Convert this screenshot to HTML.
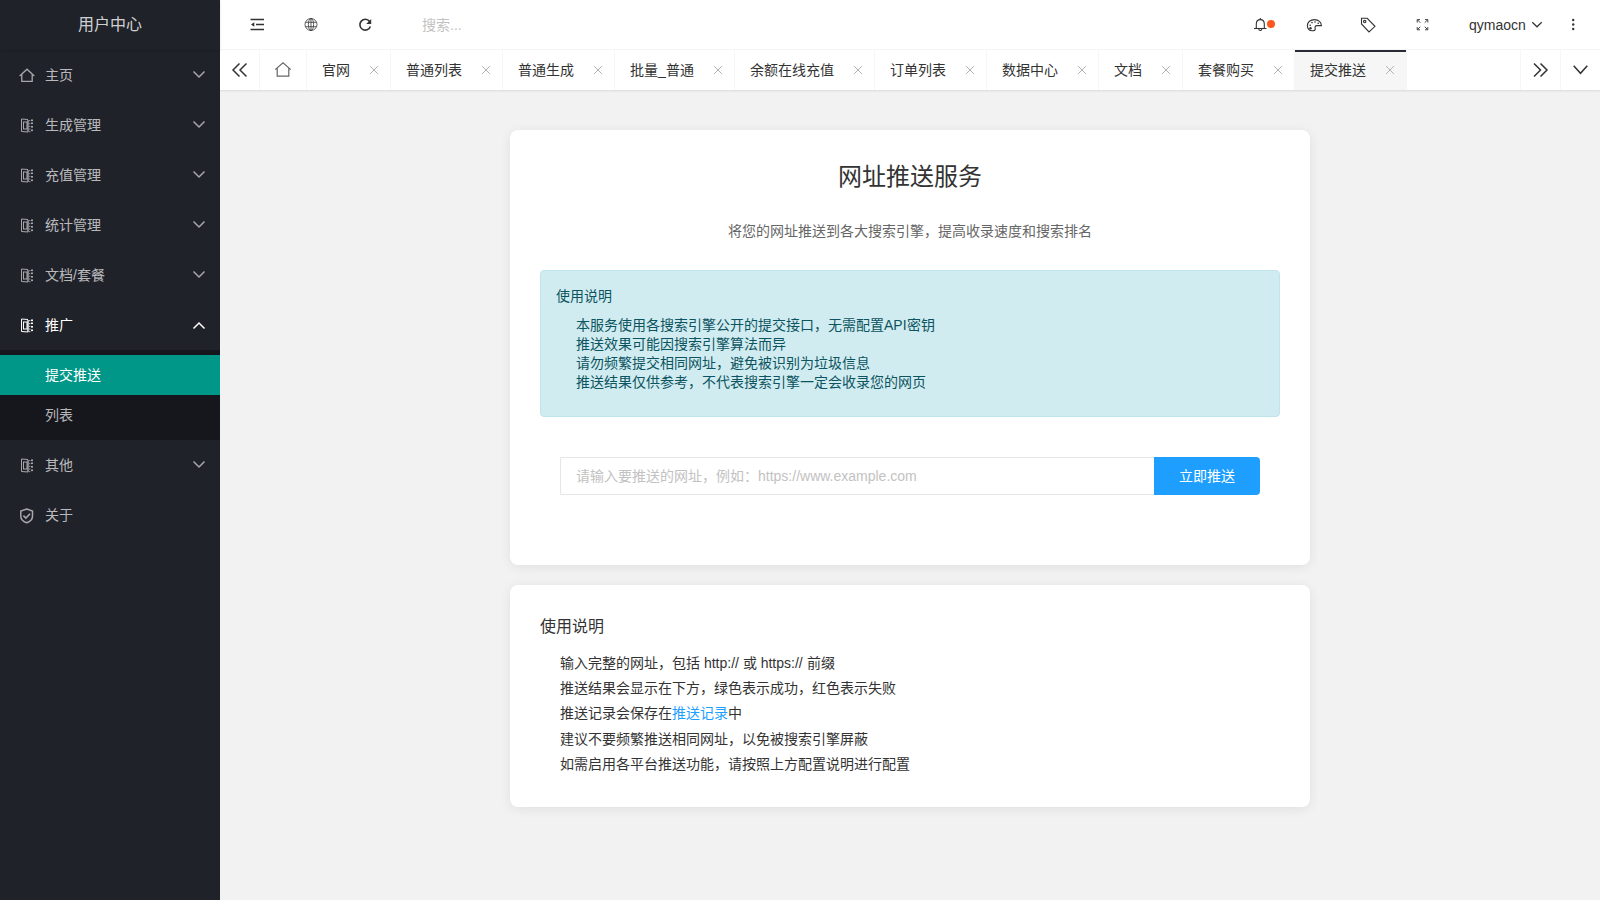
<!DOCTYPE html>
<html lang="zh-CN"><head><meta charset="utf-8">
<style>
*{margin:0;padding:0;box-sizing:border-box}
html,body{width:1600px;height:900px;overflow:hidden}
body{font-family:"Liberation Sans",sans-serif;font-size:14px;color:#333;background:#f2f2f2;position:relative}
svg{display:block;position:absolute;overflow:visible}
.side{position:absolute;left:0;top:0;width:220px;height:900px;background:#20222a}
.logo{position:absolute;left:0;top:0;width:220px;height:50px;line-height:50px;text-align:center;color:rgba(255,255,255,.8);font-size:16px;box-shadow:0 1px 2px 0 rgba(0,0,0,.15);z-index:2}
.nav{position:absolute;left:0;top:50px;width:220px}
.nav .it{position:relative;height:50px;line-height:50px;color:rgba(255,255,255,.7);padding-left:45px}
.nav .it.open{color:#fff}
.nav dl{background:rgba(0,0,0,.3);padding:5px 0}
.nav dd{height:40px;line-height:40px;padding-left:45px;color:rgba(255,255,255,.7)}
.nav dd.this{background:#009688;color:#fff}
.head{position:absolute;left:220px;top:0;width:1380px;height:50px;background:#fff;border-bottom:1px solid #f6f6f6}
.search{position:absolute;left:202px;top:0;line-height:50px;color:#c2c2c2;font-size:14px}
.uname{position:absolute;left:1249px;top:0;line-height:50px;color:#333;font-size:14px}
.tabs{position:absolute;left:220px;top:50px;width:1380px;height:40px;background:#fff;box-shadow:0 1px 2px 0 rgba(0,0,0,.1)}
.tctl{position:absolute;top:0;width:40px;height:40px}
.tl{position:absolute;top:0;height:40px;line-height:40px;border-right:1px solid #f6f6f6;padding:0 40px 0 15px;color:#333;white-space:nowrap}
.tl.first{padding-right:15px}
.tl.this{background:#f6f6f6}
.tl.this:after{content:"";position:absolute;left:0;top:0;width:100%;height:2px;background:#292b34}
.cls{position:absolute;right:8px;top:13px;width:16px;height:16px}
.card{position:absolute;left:510px;width:800px;background:#fff;border-radius:8px;box-shadow:0 2px 12px 0 rgba(0,0,0,.08)}
.c1{top:130px;height:435px}
.c2{top:585px;height:222px}
.title{position:absolute;left:0;top:159px;width:100%;text-align:center;font-size:24px;line-height:36px;color:#333}
.sub{position:absolute;left:0;top:221px;width:100%;text-align:center;font-size:14px;line-height:20px;color:#666}
.info{position:absolute;left:30px;top:140px;width:740px;height:147px;background:#d1ecf1;border:1px solid #bee5eb;border-radius:4px;color:#0c5460;padding:15px}
.info h4{font-weight:normal;font-size:14px;line-height:20px}
.info ul{list-style:none;margin:10px 0;padding-left:20px;line-height:19px}
.inp{position:absolute;left:50px;top:327px;width:594px;height:38px;border:1px solid #e6e6e6;border-right:none;border-radius:2px 0 0 2px;padding-left:15px;line-height:36px;color:#c2c2c2}
.btn{position:absolute;left:644px;top:327px;width:106px;height:38px;background:#1e9fff;color:#fff;text-align:center;line-height:38px;border-radius:0 4px 4px 0}
.c2 h3{position:absolute;left:30px;top:30px;font-weight:normal;font-size:16px;line-height:24px;color:#333}
.c2 ul{position:absolute;left:50px;top:66px;list-style:none;line-height:25.2px;color:#333}
.c2 a{color:#1e9fff;text-decoration:none}
</style></head><body>
<div class="side">
  <div class="logo">用户中心</div>
  <div class="nav">
    <div class="it">主页</div>
    <div class="it">生成管理</div>
    <div class="it">充值管理</div>
    <div class="it">统计管理</div>
    <div class="it">文档/套餐</div>
    <div class="it open">推广</div>
    <dl><dd class="this">提交推送</dd><dd>列表</dd></dl>
    <div class="it">其他</div>
    <div class="it">关于</div>
  </div>
</div>
<div class="head">
  <div class="search">搜索...</div>
  <div class="uname">qymaocn</div>
</div>
<div class="tabs">
  <div class="tctl" style="left:0;border-right:1px solid #f6f6f6"></div>
  <div class="tl first" style="left:40px;width:47px"></div>
  <div class="tl" style="left:87px">官网</div>
  <div class="tl" style="left:171px">普通列表</div>
  <div class="tl" style="left:283px">普通生成</div>
  <div class="tl" style="left:395px">批量_普通</div>
  <div class="tl" style="left:515px">余额在线充值</div>
  <div class="tl" style="left:655px">订单列表</div>
  <div class="tl" style="left:767px">数据中心</div>
  <div class="tl" style="left:879px">文档</div>
  <div class="tl" style="left:963px">套餐购买</div>
  <div class="tl this" style="left:1075px">提交推送</div>
  <div class="tctl" style="left:1300px;border-left:1px solid #f6f6f6"></div>
  <div class="tctl" style="left:1340px;border-left:1px solid #f6f6f6"></div>
</div>
<div class="card c1">
  <div class="title" style="top:29px">网址推送服务</div>
  <div class="sub" style="top:91px">将您的网址推送到各大搜索引擎，提高收录速度和搜索排名</div>
  <div class="info">
    <h4>使用说明</h4>
    <ul>
      <li>本服务使用各搜索引擎公开的提交接口，无需配置API密钥</li>
      <li>推送效果可能因搜索引擎算法而异</li>
      <li>请勿频繁提交相同网址，避免被识别为垃圾信息</li>
      <li>推送结果仅供参考，不代表搜索引擎一定会收录您的网页</li>
    </ul>
  </div>
  <div class="inp">请输入要推送的网址，例如：https://www.example.com</div>
  <div class="btn">立即推送</div>
</div>
<div class="card c2">
  <h3>使用说明</h3>
  <ul>
    <li>输入完整的网址，包括 http:// 或 https:// 前缀</li>
    <li>推送结果会显示在下方，绿色表示成功，红色表示失败</li>
    <li>推送记录会保存在<a>推送记录</a>中</li>
    <li>建议不要频繁推送相同网址，以免被搜索引擎屏蔽</li>
    <li>如需启用各平台推送功能，请按照上方配置说明进行配置</li>
  </ul>
</div>
<svg style="left:0;top:0;z-index:10" width="1600" height="900" viewBox="0 0 1600 900"><path d="M19.7 76 L27 69.2 L34.3 76 M21.8 74 V81.3 H32.2 V74" fill="none" stroke="#a6a7aa" stroke-width="1.3"/><g fill="none" stroke="#a6a7aa" stroke-width="1"><path d="M28 119.5 L21.5 119 V131.5 L28 132"/><rect x="23.5" y="122" width="3.5" height="7"/></g><g fill="#a6a7aa"><rect x="27.3" y="120" width="1.4" height="12"/><rect x="29.3" y="120" width="1" height="1.2"/><rect x="29.3" y="123" width="1" height="1.2"/><rect x="29.3" y="125.8" width="1" height="1.2"/><rect x="29.3" y="128.5" width="1" height="1.2"/><rect x="29.3" y="131" width="1" height="1.2"/><rect x="31" y="119.5" width="2" height="1.6"/><rect x="31" y="122.5" width="2" height="1.6"/><rect x="31" y="126" width="2" height="1.6"/><rect x="31" y="129.5" width="2" height="1.6"/></g><g fill="none" stroke="#a6a7aa" stroke-width="1"><path d="M28 169.5 L21.5 169 V181.5 L28 182"/><rect x="23.5" y="172" width="3.5" height="7"/></g><g fill="#a6a7aa"><rect x="27.3" y="170" width="1.4" height="12"/><rect x="29.3" y="170" width="1" height="1.2"/><rect x="29.3" y="173" width="1" height="1.2"/><rect x="29.3" y="175.8" width="1" height="1.2"/><rect x="29.3" y="178.5" width="1" height="1.2"/><rect x="29.3" y="181" width="1" height="1.2"/><rect x="31" y="169.5" width="2" height="1.6"/><rect x="31" y="172.5" width="2" height="1.6"/><rect x="31" y="176" width="2" height="1.6"/><rect x="31" y="179.5" width="2" height="1.6"/></g><g fill="none" stroke="#a6a7aa" stroke-width="1"><path d="M28 219.5 L21.5 219 V231.5 L28 232"/><rect x="23.5" y="222" width="3.5" height="7"/></g><g fill="#a6a7aa"><rect x="27.3" y="220" width="1.4" height="12"/><rect x="29.3" y="220" width="1" height="1.2"/><rect x="29.3" y="223" width="1" height="1.2"/><rect x="29.3" y="225.8" width="1" height="1.2"/><rect x="29.3" y="228.5" width="1" height="1.2"/><rect x="29.3" y="231" width="1" height="1.2"/><rect x="31" y="219.5" width="2" height="1.6"/><rect x="31" y="222.5" width="2" height="1.6"/><rect x="31" y="226" width="2" height="1.6"/><rect x="31" y="229.5" width="2" height="1.6"/></g><g fill="none" stroke="#a6a7aa" stroke-width="1"><path d="M28 269.5 L21.5 269 V281.5 L28 282"/><rect x="23.5" y="272" width="3.5" height="7"/></g><g fill="#a6a7aa"><rect x="27.3" y="270" width="1.4" height="12"/><rect x="29.3" y="270" width="1" height="1.2"/><rect x="29.3" y="273" width="1" height="1.2"/><rect x="29.3" y="275.8" width="1" height="1.2"/><rect x="29.3" y="278.5" width="1" height="1.2"/><rect x="29.3" y="281" width="1" height="1.2"/><rect x="31" y="269.5" width="2" height="1.6"/><rect x="31" y="272.5" width="2" height="1.6"/><rect x="31" y="276" width="2" height="1.6"/><rect x="31" y="279.5" width="2" height="1.6"/></g><g fill="none" stroke="#fff" stroke-width="1"><path d="M28 319.5 L21.5 319 V331.5 L28 332"/><rect x="23.5" y="322" width="3.5" height="7"/></g><g fill="#fff"><rect x="27.3" y="320" width="1.4" height="12"/><rect x="29.3" y="320" width="1" height="1.2"/><rect x="29.3" y="323" width="1" height="1.2"/><rect x="29.3" y="325.8" width="1" height="1.2"/><rect x="29.3" y="328.5" width="1" height="1.2"/><rect x="29.3" y="331" width="1" height="1.2"/><rect x="31" y="319.5" width="2" height="1.6"/><rect x="31" y="322.5" width="2" height="1.6"/><rect x="31" y="326" width="2" height="1.6"/><rect x="31" y="329.5" width="2" height="1.6"/></g><g fill="none" stroke="#a6a7aa" stroke-width="1"><path d="M28 459.5 L21.5 459 V471.5 L28 472"/><rect x="23.5" y="462" width="3.5" height="7"/></g><g fill="#a6a7aa"><rect x="27.3" y="460" width="1.4" height="12"/><rect x="29.3" y="460" width="1" height="1.2"/><rect x="29.3" y="463" width="1" height="1.2"/><rect x="29.3" y="465.8" width="1" height="1.2"/><rect x="29.3" y="468.5" width="1" height="1.2"/><rect x="29.3" y="471" width="1" height="1.2"/><rect x="31" y="459.5" width="2" height="1.6"/><rect x="31" y="462.5" width="2" height="1.6"/><rect x="31" y="466" width="2" height="1.6"/><rect x="31" y="469.5" width="2" height="1.6"/></g><path d="M193.5 71.5 L199 77.0 L204.5 71.5" fill="none" stroke="#a6a7aa" stroke-width="1.5"/><path d="M193.5 121.5 L199 127.0 L204.5 121.5" fill="none" stroke="#a6a7aa" stroke-width="1.5"/><path d="M193.5 171.5 L199 177.0 L204.5 171.5" fill="none" stroke="#a6a7aa" stroke-width="1.5"/><path d="M193.5 221.5 L199 227.0 L204.5 221.5" fill="none" stroke="#a6a7aa" stroke-width="1.5"/><path d="M193.5 271.5 L199 277.0 L204.5 271.5" fill="none" stroke="#a6a7aa" stroke-width="1.5"/><path d="M193.5 461.5 L199 467.0 L204.5 461.5" fill="none" stroke="#a6a7aa" stroke-width="1.5"/><path d="M193.5 328.5 L199 323 L204.5 328.5" fill="none" stroke="#fff" stroke-width="1.5"/><path d="M26.7 509 L32.5 511 V516.2 C32.5 519.6 29.8 521.6 26.7 522.8 C23.6 521.6 20.8 519.6 20.8 516.2 V511 Z" fill="none" stroke="#a6a7aa" stroke-width="1.5"/><path d="M23.4 515.6 L25.9 518.1 L30 513.8" fill="none" stroke="#a6a7aa" stroke-width="1.6"/><g stroke="#333" stroke-width="1.5" fill="none"><path d="M250.5 19.5 H264 M256 24.5 H264 M250.5 29.5 H264"/></g><path d="M251 24.5 L254.3 22.3 V26.7 Z" fill="#333"/><g stroke="#333" stroke-width="0.8" fill="none"><circle cx="311" cy="24.5" r="6"/><ellipse cx="311" cy="24.5" rx="2.6" ry="6"/><path d="M311 18.5 V30.5 M305.5 22.3 H316.5 M305.5 26.7 H316.5"/></g><path d="M369.6 21.4 A5.4 5.4 0 1 0 370.4 26.5" fill="none" stroke="#333" stroke-width="1.6"/><path d="M371.2 19 V24 H366.2 Z" fill="#333"/><g stroke="#333" stroke-width="1.1" fill="none"><path d="M1256.3 28 V24 C1256.3 21.3 1258 19.6 1260.3 19.6 C1262.6 19.6 1264.3 21.3 1264.3 24 V28"/><path d="M1254 28.5 H1266.5"/><path d="M1258.8 29 A1.5 1.5 0 0 0 1261.8 29"/><path d="M1260.3 18 V19.5"/></g><circle cx="1271" cy="24" r="4" fill="#ff5722"/><g stroke="#333" stroke-width="1.1" fill="none"><path d="M1314.3 19.6 C1318.6 19.6 1321.4 22.4 1321.4 25.6 L1317 25.6 C1315.2 25.6 1314.6 27.4 1315.2 28.6 C1315.7 29.9 1314.2 30.9 1312.5 30.8 C1309.3 30.5 1307.4 28.4 1307.4 25.4 C1307.4 22 1310.6 19.6 1314.3 19.6 Z"/></g><g fill="#333"><circle cx="1310.2" cy="25.2" r="0.8"/><circle cx="1312" cy="22.6" r="0.8"/><circle cx="1315" cy="22" r="0.8"/><circle cx="1318.2" cy="23.3" r="0.8"/><circle cx="1310.5" cy="28.2" r="1.2"/></g><g stroke="#333" stroke-width="1.1" fill="none"><path d="M1361.5 18.3 H1367.2 L1375 26.3 L1369 32 L1361.5 24 Z"/><circle cx="1364.7" cy="21.6" r="1.2"/></g><g stroke="#333" stroke-width="0.9" fill="none"><path d="M1417.2 22.5 V19.6 H1420 M1417.5 19.9 L1420.3 22.7 M1425 19.6 H1427.8 V22.5 M1427.5 19.9 L1424.7 22.7 M1417.2 27 V29.8 H1420 M1417.5 29.5 L1420.3 26.7 M1425 29.8 H1427.8 V27 M1427.5 29.5 L1424.7 26.7"/></g><path d="M1532.3 22.2 L1537 26.8 L1541.7 22.2" fill="none" stroke="#333" stroke-width="1.2"/><g fill="#333"><circle cx="1573.2" cy="20" r="1.2"/><circle cx="1573.2" cy="24.5" r="1.2"/><circle cx="1573.2" cy="29" r="1.2"/></g><path d="M239.5 63.5 L233 70 L239.5 76.5 M246.5 63.5 L240 70 L246.5 76.5" fill="none" stroke="#333" stroke-width="1.5"/><path d="M275.2 69.6 L283 62.8 L290.8 69.6 M277.2 68 V76.2 H288.8 V68" fill="none" stroke="#666" stroke-width="1.2"/><path d="M370 66 L378 74 M378 66 L370 74" fill="none" stroke="#b3b3b3" stroke-width="1"/><path d="M482 66 L490 74 M490 66 L482 74" fill="none" stroke="#b3b3b3" stroke-width="1"/><path d="M594 66 L602 74 M602 66 L594 74" fill="none" stroke="#b3b3b3" stroke-width="1"/><path d="M714 66 L722 74 M722 66 L714 74" fill="none" stroke="#b3b3b3" stroke-width="1"/><path d="M854 66 L862 74 M862 66 L854 74" fill="none" stroke="#b3b3b3" stroke-width="1"/><path d="M966 66 L974 74 M974 66 L966 74" fill="none" stroke="#b3b3b3" stroke-width="1"/><path d="M1078 66 L1086 74 M1086 66 L1078 74" fill="none" stroke="#b3b3b3" stroke-width="1"/><path d="M1162 66 L1170 74 M1170 66 L1162 74" fill="none" stroke="#b3b3b3" stroke-width="1"/><path d="M1274 66 L1282 74 M1282 66 L1274 74" fill="none" stroke="#b3b3b3" stroke-width="1"/><path d="M1386 66 L1394 74 M1394 66 L1386 74" fill="none" stroke="#b3b3b3" stroke-width="1"/><path d="M1534 63.5 L1540.5 70 L1534 76.5 M1540.5 63.5 L1547 70 L1540.5 76.5" fill="none" stroke="#333" stroke-width="1.5"/><path d="M1573.7 65.7 L1580.5 73.3 L1587.3 65.7" fill="none" stroke="#333" stroke-width="1.5"/></svg>
</body></html>
